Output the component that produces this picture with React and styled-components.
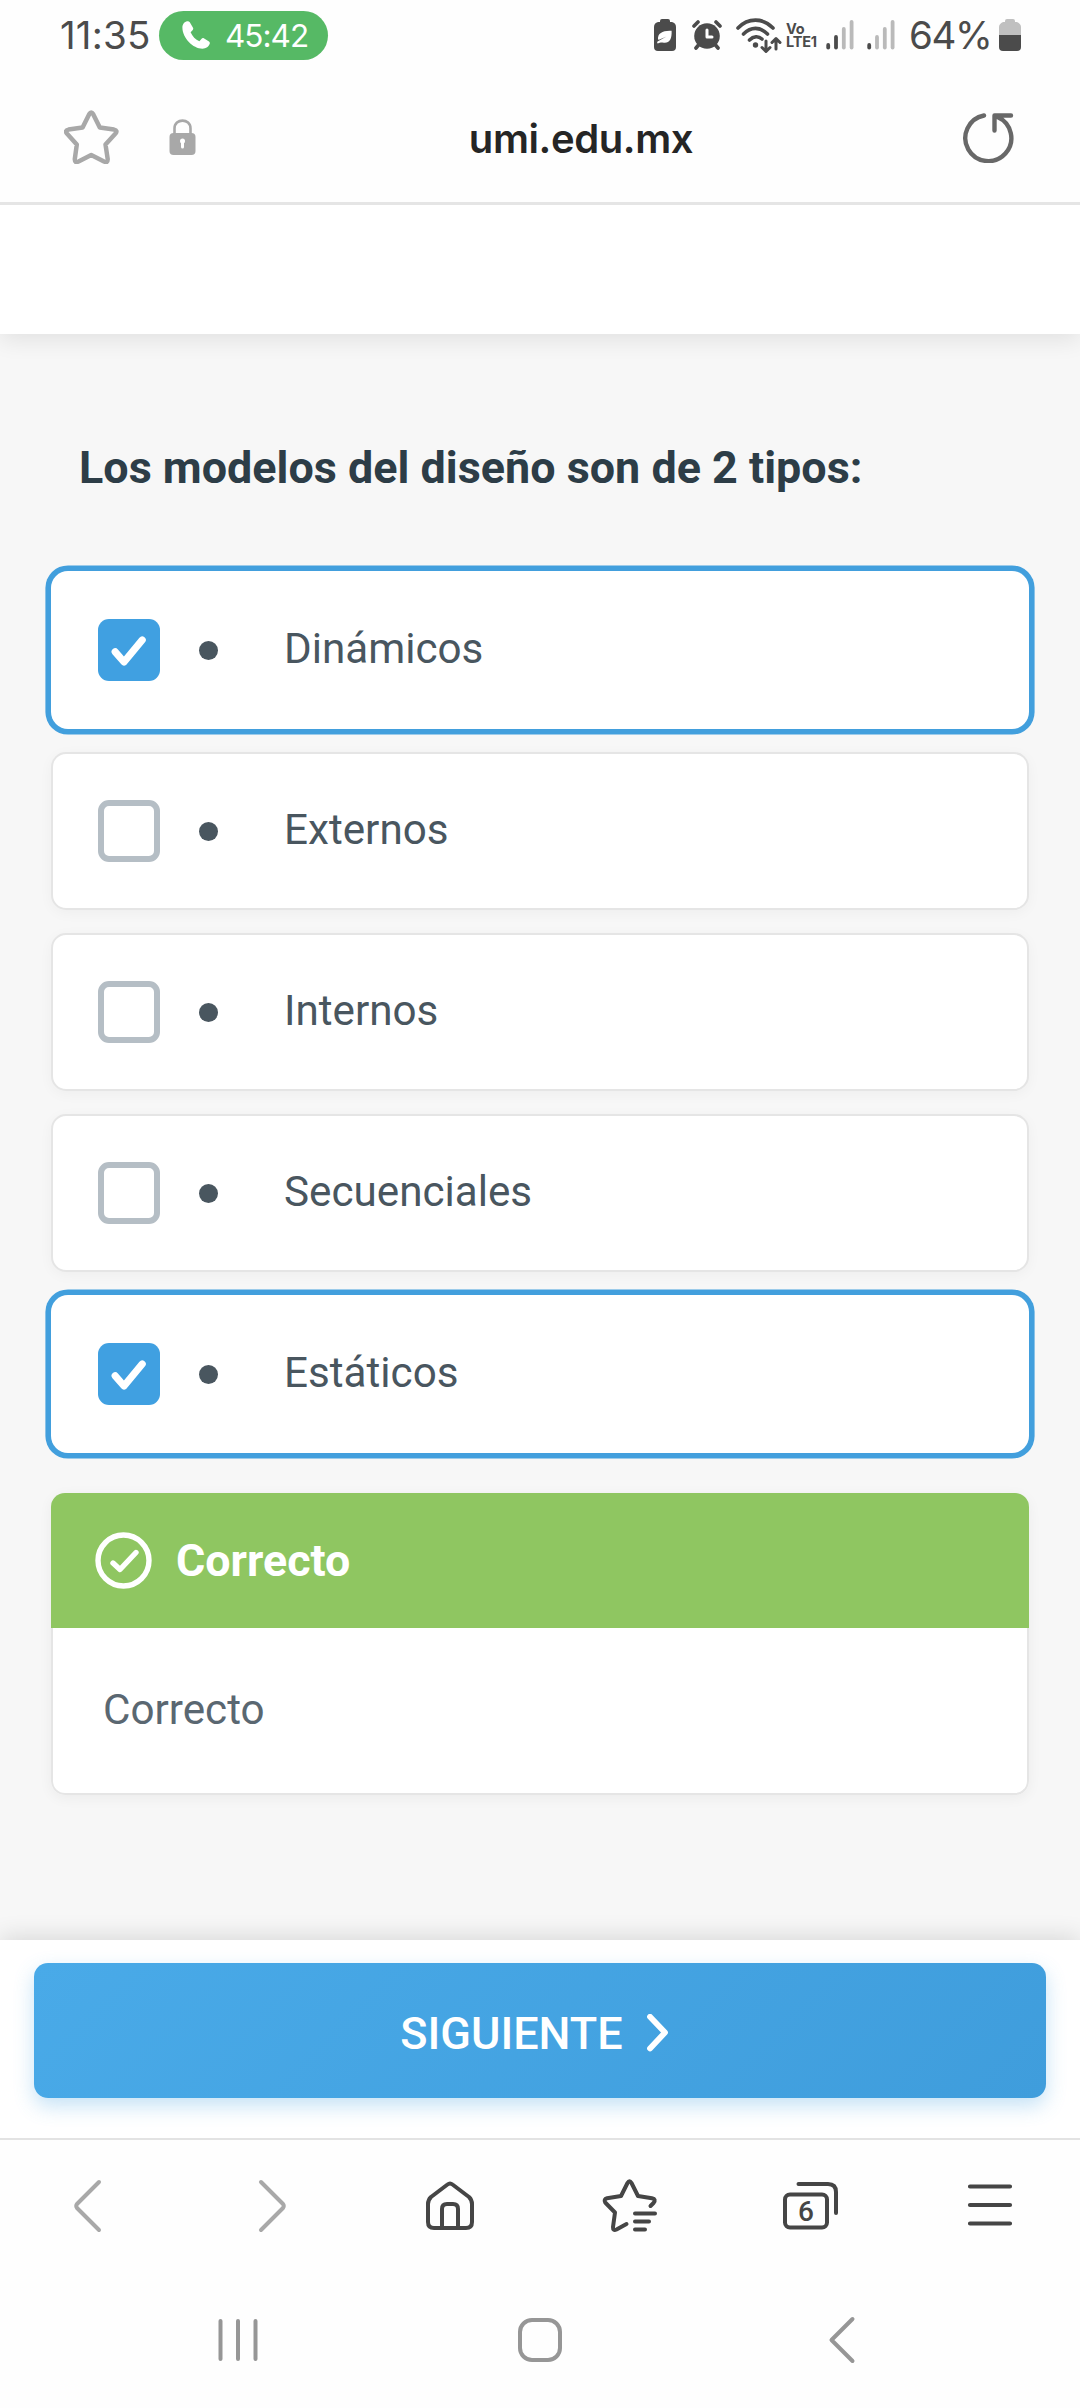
import React from "react";
import styled, { createGlobalStyle } from "styled-components";

const Global = createGlobalStyle`
  * { box-sizing: border-box; }
  body { margin: 0; background: #fefefe; }
`;

const system = `Inter, Roboto, sans-serif`;

const Screen = styled.div`
  width: 1080px;
  height: 2408px;
  display: flex;
  flex-direction: column;
  overflow: hidden;
  background: #fefefe;
  font-family: Roboto, sans-serif;
`;

const StatusBar = styled.header`
  height: 70px;
  padding: 11px 59px 11px 60px;
  display: flex;
  justify-content: space-between;
  align-items: center;
  color: #4b4b4b;
  font-family: ${system};
`;

const StatusGroup = styled.div`
  display: flex;
  align-items: center;
  height: 48px;
`;

const StatusText = styled.span`
  width: 89px;
  font-size: 38.5px;
  line-height: 48px;
  letter-spacing: ${(p) => p.$ls || 0}px;
  white-space: nowrap;
`;

const CallPill = styled.div`
  display: flex;
  align-items: center;
  gap: 15px;
  width: 169px;
  height: 49px;
  padding-left: 23px;
  margin-left: 10px;
  border-radius: 25px;
  background: #56b965;
  color: #fff;
  font-size: 31.5px;
  line-height: 49px;
  letter-spacing: -1px;
`;

const Glyph = styled.svg`
  display: block;
  flex: none;
  margin-left: ${(p) => p.$ml || 0}px;
  fill: none;
  stroke-linecap: round;
  stroke-linejoin: round;
`;

const Network = styled.div`
  display: flex;
  flex-direction: column;
  width: 32px;
  margin-left: 4px;
  font-size: 14.5px;
  font-weight: 700;
  line-height: 13px;
  letter-spacing: -0.2px;
  white-space: nowrap;
`;

const AddressBar = styled.div`
  z-index: 2;
  height: 135px;
  padding: 2px 66px 0 64px;
  display: grid;
  grid-template-columns: 200px 1fr 120px;
  align-items: center;
  border-bottom: 3px solid #e5e5e5;
  background: #fefefe;
`;

const AddressIcons = styled.div`
  display: flex;
  align-items: center;
  justify-content: ${(p) => (p.$end ? "flex-end" : "flex-start")};
  gap: 50px;
`;

const Address = styled.div`
  padding: 2px 0 0 4px;
  text-align: center;
  font-family: ${system};
  font-size: 40px;
  font-weight: 600;
  letter-spacing: -0.4px;
  color: #252525;
`;

const PageHeader = styled.div`
  flex: none;
  z-index: 1;
  height: 129px;
  background: #fff;
  box-shadow: 0 6px 22px rgba(0, 0, 0, 0.09);
`;

const Content = styled.main`
  flex: none;
  height: 1606px;
  padding: 0 51px;
  background: #f7f7f7;
`;

const Question = styled.h1`
  margin: 0;
  height: 237px;
  padding: 107px 0 0 28px;
  font-size: 44.9px;
  font-weight: 700;
  line-height: 53px;
  color: #2d3d47;
`;

const Options = styled.ul`
  display: flex;
  flex-direction: column;
  gap: 23px;
  margin: 0;
  padding: 0;
  list-style: none;
`;

const Option = styled.li`
  display: flex;
  align-items: center;
  height: 158px;
  padding-left: ${(p) => (p.$selected ? 47 : 45)}px;
  border-radius: ${(p) => (p.$selected ? 17 : 15)}px;
  border: ${(p) => (p.$selected ? "none" : "2px solid #e5e5e5")};
  background: #fff;
  box-shadow: ${(p) =>
    p.$selected ? "0 0 0 5.6px #429fdd" : "0 3px 14px rgba(0, 0, 0, 0.04)"};
`;

const Checkbox = styled.span`
  display: flex;
  align-items: center;
  justify-content: center;
  width: 62px;
  height: 62px;
  border-radius: 11px;
  border: ${(p) => (p.$checked ? "none" : "6px solid #b5bec5")};
  background: ${(p) => (p.$checked ? "#40a0e1" : "#fff")};
`;

const Bullet = styled.span`
  width: 19px;
  height: 19px;
  margin-left: 39px;
  border-radius: 50%;
  background: #49565f;
`;

const Label = styled.span`
  margin-left: 66px;
  padding-bottom: 3px;
  font-size: 42.2px;
  line-height: 50px;
  color: #49565f;
`;

const Feedback = styled.section`
  margin-top: 40px;
  height: 302px;
  border-radius: 14px;
  box-shadow: 0 3px 14px rgba(0, 0, 0, 0.05);
  overflow: hidden;
  display: flex;
  flex-direction: column;
`;

const FeedbackHead = styled.div`
  display: flex;
  align-items: center;
  gap: 24px;
  height: 135px;
  padding-left: 44px;
  background: #8fc661;
  color: #fff;
  font-size: 44.8px;
  font-weight: 700;
`;

const FeedbackBody = styled.div`
  flex: 1;
  padding: 57px 0 0 50px;
  border: 2px solid #e5e5e5;
  border-top: 0;
  border-radius: 0 0 14px 14px;
  background: #fff;
  font-size: 42.2px;
  line-height: 50px;
  color: #5a6771;
`;

const ActionBar = styled.div`
  flex: none;
  height: 198px;
  padding: 23px 34px 0;
  background: #fff;
  box-shadow: 0 -4px 22px rgba(0, 0, 0, 0.12);
`;

const NextButton = styled.button`
  display: flex;
  align-items: center;
  justify-content: center;
  gap: 24px;
  width: 100%;
  height: 135px;
  padding: 6px 11px 0 0;
  border: 0;
  border-radius: 14px;
  background: linear-gradient(135deg, #49aae8, #3f9ddc);
  box-shadow: 0 8px 20px rgba(64, 160, 225, 0.3);
  color: #fff;
  font: 500 45px/53px Roboto, sans-serif;
`;

const Toolbar = styled.nav`
  flex: none;
  z-index: 1;
  height: 138px;
  padding-top: 38px;
  display: grid;
  grid-template-columns: repeat(6, 1fr);
  justify-items: center;
  border-top: 2px solid #e3e3e3;
  background: #fefefe;
`;

const NavBar = styled.nav`
  display: flex;
  align-items: flex-start;
  padding: 38px 0 0 216px;
`;

const TabCount = styled.text`
  font: 500 28px Roboto, sans-serif;
  fill: #454545;
  stroke: none;
`;

const Tick = () => (
  <Glyph width="62" height="62" viewBox="0 0 62 62" stroke="#fff" strokeWidth="7.2">
    <path d="M17.2 32.8 26 43 44.2 21" />
  </Glyph>
);

const Bars = ({ on, ml }) => (
  <Glyph $ml={ml} width="28" height="32" viewBox="0 0 28 32" strokeWidth="3.8">
    {[24, 16, 8, 1].map((y, i) => (
      <path key={y} d={`M${2.2 + i * 7.8} ${y + 2}V28.5`} stroke={i < on ? "#4b4b4b" : "#bababa"} />
    ))}
  </Glyph>
);

const options = [
  ["Dinámicos", true],
  ["Externos", false],
  ["Internos", false],
  ["Secuenciales", false],
  ["Estáticos", true],
];

export default function App() {
  return (
    <Screen>
      <Global />
      <StatusBar>
        <StatusGroup>
          <StatusText $ls={0.2}>11:35</StatusText>
          <CallPill>
            <Glyph width="28" height="28" viewBox="0 0 28 28">
              <path fill="#fff" d="M5.2.3C2.5.8.4 3.3.4 6.5.4 17 11 27.7 20.5 27.7 24 27.7 27 25.5 27.8 22.6 28 21.7 27.7 21 27 20.5L21.800 17.300C21 16.800 20.200 17 19.600 17.700L17.400 20.300C13.500 18.500 10.300 15.200 8.600 11.200L10.800 8.900C11.300 8.300 11.400 7.500 11 6.800L7.800 1.200C7.200.4 6.200.1 5.200.3Z" />
            </Glyph>
            <span>45:42</span>
          </CallPill>
        </StatusGroup>
        <StatusGroup>
          <Glyph width="22" height="32" viewBox="0 0 22 32">
            <path fill="#4b4b4b" d="M6 2Q6 0 8 0H14Q16 0 16 2V3H18Q22 4 22 8V28Q22 32 18 32H4Q0 32 0 28V8Q0 4 4 3H6Z" />
            <path fill="#fff" d="M4 20.500C3.500 14 9 11.300 17.600 11.800 18 20 15.500 24.300 10 23.800 7.500 23.500 6 23 4.500 24.300L3 24.300 3.500 22.500 12.500 17.500 5 20.800Z" />
          </Glyph>
          <Glyph $ml={16} width="30" height="30" viewBox="0 0 30 30" stroke="#4b4b4b" strokeWidth="3.6">
            <circle cx="15" cy="16" r="12.8" fill="#4b4b4b" stroke="none" />
            <path d="M2 6 6 2M28 6 24 2M6.500 25 4 28M23.500 25 26 28" />
            <path d="M15 10V17H20" stroke="#fff" strokeWidth="3" />
          </Glyph>
          <Glyph $ml={14} width="46" height="35" viewBox="0 0 46 35" stroke="#4b4b4b" strokeWidth="3.6">
            <path d="M2 10C12-.5 27-.5 37 10M7.500 16C15 8.500 24 8.500 31.500 16M13.500 22C17.500 18 22.500 18 26 21" />
            <circle cx="19.5" cy="27" r="2.7" fill="#4b4b4b" stroke="none" />
            <path d="M30 23V33M26 29.500 30 33.500 34 29.500M40 31V21M36 24.500 40 20.500 44 24.500" strokeWidth="3" />
          </Glyph>
          <Network>
            <span>Vo</span>
            <span>LTE1</span>
          </Network>
          <Bars on={2} ml={8} />
          <Bars on={1} ml={13} />
          <StatusText as={Percent}>64%</StatusText>
          <Glyph width="22" height="32" viewBox="0 0 22 32">
            <path fill="#c0c0c0" d="M6 2Q6 0 8 0H14Q16 0 16 2V3H18Q22 5 22 8V16H0V8Q0 5 4 3H6Z" />
            <path fill="#4b4b4b" d="M0 16H22V28Q22 32 18 32H4Q0 32 0 28Z" />
          </Glyph>
        </StatusGroup>
      </StatusBar>

      <AddressBar>
        <AddressIcons>
          <Glyph width="55" height="54" viewBox="0 0 55 54" stroke="#a8a8a8" strokeWidth="4.5">
            <path d="M25.200 4.200Q27.200.8 29.200 4.200L35.800 17.500 50 19.600Q54 20.500 51.500 23.500L41.500 34.500 43.700 49Q43.800 53.300 40 51.500L27.200 45 14.500 51.500Q10.700 53.300 10.800 49L12.800 34.500 2.900 23.500Q.5 20.500 4.500 19.600L18.600 17.500Z" />
          </Glyph>
          <Glyph width="27" height="36" viewBox="0 0 27 36">
            <path d="M5.500 16V9.500C5.500-1 21.500-1 21.500 9.500V16" stroke="#a8a8a8" strokeWidth="2.6" />
            <rect x=".5" y="14" width="26" height="22" rx="4" fill="#a8a8a8" />
            <path d="M13.500 22.500V28" stroke="#fff" strokeWidth="3" />
            <circle cx="13.5" cy="22" r="2.5" fill="#fff" />
          </Glyph>
        </AddressIcons>
        <Address>umi.edu.mx</Address>
        <AddressIcons $end>
          <Glyph width="52" height="52" viewBox="0 0 52 52" stroke="#686868" strokeWidth="4.4">
            <path d="M22 4.500A23 23 0 1 0 35.500 6M49 4.500H32.500V19.500" />
          </Glyph>
        </AddressIcons>
      </AddressBar>

      <PageHeader />

      <Content>
        <Question>Los modelos del diseño son de 2 tipos:</Question>
        <Options>
          {options.map(([name, on]) => (
            <Option key={name} $selected={on}>
              <Checkbox $checked={on}>{on && <Tick />}</Checkbox>
              <Bullet />
              <Label>{name}</Label>
            </Option>
          ))}
        </Options>
        <Feedback>
          <FeedbackHead>
            <Glyph width="57" height="57" viewBox="0 0 57 57" stroke="#fff" strokeWidth="5.4">
              <circle cx="28.5" cy="28.5" r="25.5" />
              <path d="M18 31 25 37.500 41 20.500" />
            </Glyph>
            <span>Correcto</span>
          </FeedbackHead>
          <FeedbackBody>Correcto</FeedbackBody>
        </Feedback>
      </Content>

      <ActionBar>
        <NextButton>
          <span>SIGUIENTE</span>
          <Glyph width="22" height="40" viewBox="0 0 22 40" stroke="#fff" strokeWidth="5.8">
            <path d="M3 2.800 18 18.500 3 34.500" />
          </Glyph>
        </NextButton>
      </ActionBar>

      <Toolbar>
        <Glyph width="34" height="56" viewBox="0 0 34 56" stroke="#a8a8a8" strokeWidth="4">
          <path d="M26 4 4 26Q2.500 28 4 30L26 52" />
        </Glyph>
        <Glyph width="34" height="56" viewBox="0 0 34 56" stroke="#a8a8a8" strokeWidth="4">
          <path d="M8 4 30 26Q31.500 28 30 30L8 52" />
        </Glyph>
        <Glyph width="50" height="56" viewBox="0 0 50 56" stroke="#454545" strokeWidth="4">
          <path d="M22.500 6.500Q25 4.500 27.500 6.500L44 19Q47 22 47 26V44Q47 50 41 50H9Q3 50 3 44V26Q3 22 6 19Z" />
          <path d="M17 49V31Q17 26 22 26H28Q33 26 33 31V49" />
        </Glyph>
        <Glyph width="56" height="56" viewBox="0 0 56 56" stroke="#454545" strokeWidth="4">
          <path d="M24.500 46 14.500 51.500Q10.800 53 11 49L13 34.500 3.200 24.500Q1.500 21 5 20.200L19 18 25.500 5Q27.500 1.500 29.500 5L36 18 50 20.200Q54.500 21 51.500 25L48.500 28" />
          <path d="M33 35.500H53M33 43.500H47M33 51.500H43" />
        </Glyph>
        <Glyph width="58" height="56" viewBox="0 0 58 56" stroke="#454545" strokeWidth="4">
          <rect x="4" y="16.5" width="42" height="33" rx="5" />
          <path d="M17.500 6H47Q55 6 55 14V35" />
          <TabCount x="25" y="43" textAnchor="middle">6</TabCount>
        </Glyph>
        <Glyph width="48" height="56" viewBox="0 0 48 56" stroke="#454545" strokeWidth="4.2">
          <path d="M4 8.500H44M4 27H44M4 45.500H44" />
        </Glyph>
      </Toolbar>

      <NavBar>
        <Glyph width="44" height="52" viewBox="0 0 44 52" stroke="#969696" strokeWidth="4">
          <path d="M4.500 7V45M22 7V45M39.500 7V45" />
        </Glyph>
        <Glyph $ml={256} width="48" height="52" viewBox="0 0 48 52" stroke="#969696" strokeWidth="4">
          <rect x="4" y="6" width="40" height="40" rx="12" />
        </Glyph>
        <Glyph $ml={261} width="34" height="52" viewBox="0 0 34 52" stroke="#969696" strokeWidth="4">
          <path d="M27.500 5 6.500 26 27.500 47" />
        </Glyph>
      </NavBar>
    </Screen>
  );
}

const Percent = styled.span`
  margin-left: 14px;
  width: 90px;
  letter-spacing: -1.4px;
`;
